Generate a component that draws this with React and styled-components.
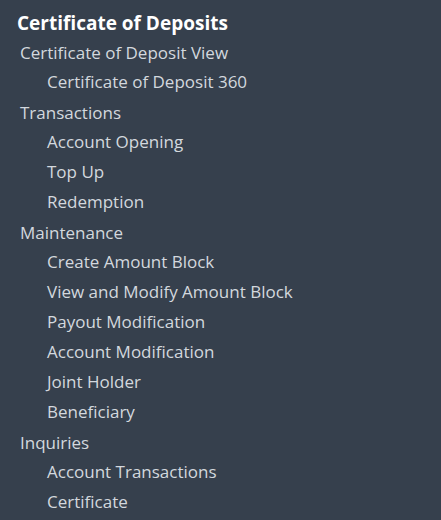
import React from 'react';
import styled, { createGlobalStyle } from 'styled-components';

const GlobalStyle = createGlobalStyle`
  html, body {
    margin: 0;
    padding: 0;
    background: #36404d;
  }
  body {
    font-family: "Open Sans", "Noto Sans", sans-serif;
  }
`;

const menu = [
  { title: 'Certificate of Deposit View', items: ['Certificate of Deposit 360'] },
  { title: 'Transactions', items: ['Account Opening', 'Top Up', 'Redemption'] },
  {
    title: 'Maintenance',
    items: [
      'Create Amount Block',
      'View and Modify Amount Block',
      'Payout Modification',
      'Account Modification',
      'Joint Holder',
      'Beneficiary',
    ],
  },
  { title: 'Inquiries', items: ['Account Transactions', 'Certificate'] },
];

function App() {
  return (
    <>
      <GlobalStyle />
      <Panel>
        <Heading>Certificate of Deposits</Heading>
        {menu.map((group) => (
          <Group key={group.title}>
            <Row>{group.title}</Row>
            {group.items.map((item) => (
              <Row key={item} $sub>{item}</Row>
            ))}
          </Group>
        ))}
      </Panel>
    </>
  );
}

const Panel = styled.div`
  width: 441px;
  height: 520px;
  box-sizing: border-box;
  padding: 10px 0 0 17px;
  background: #36404d;
  display: flex;
  flex-direction: column;
  overflow: hidden;
`;

const Heading = styled.div`
  color: #ffffff;
  font-size: 19px;
  font-weight: 700;
  line-height: 26px;
  margin-bottom: 2px;
`;

const Group = styled.div`
  display: flex;
  flex-direction: column;
  margin-bottom: 1px;
`;

const Row = styled.div`
  color: #d3d8de;
  font-size: 17px;
  line-height: ${(p) => (p.$sub ? '30px' : '29px')};
  padding-left: ${(p) => (p.$sub ? '30px' : '3px')};
  white-space: nowrap;
`;

export default App;
